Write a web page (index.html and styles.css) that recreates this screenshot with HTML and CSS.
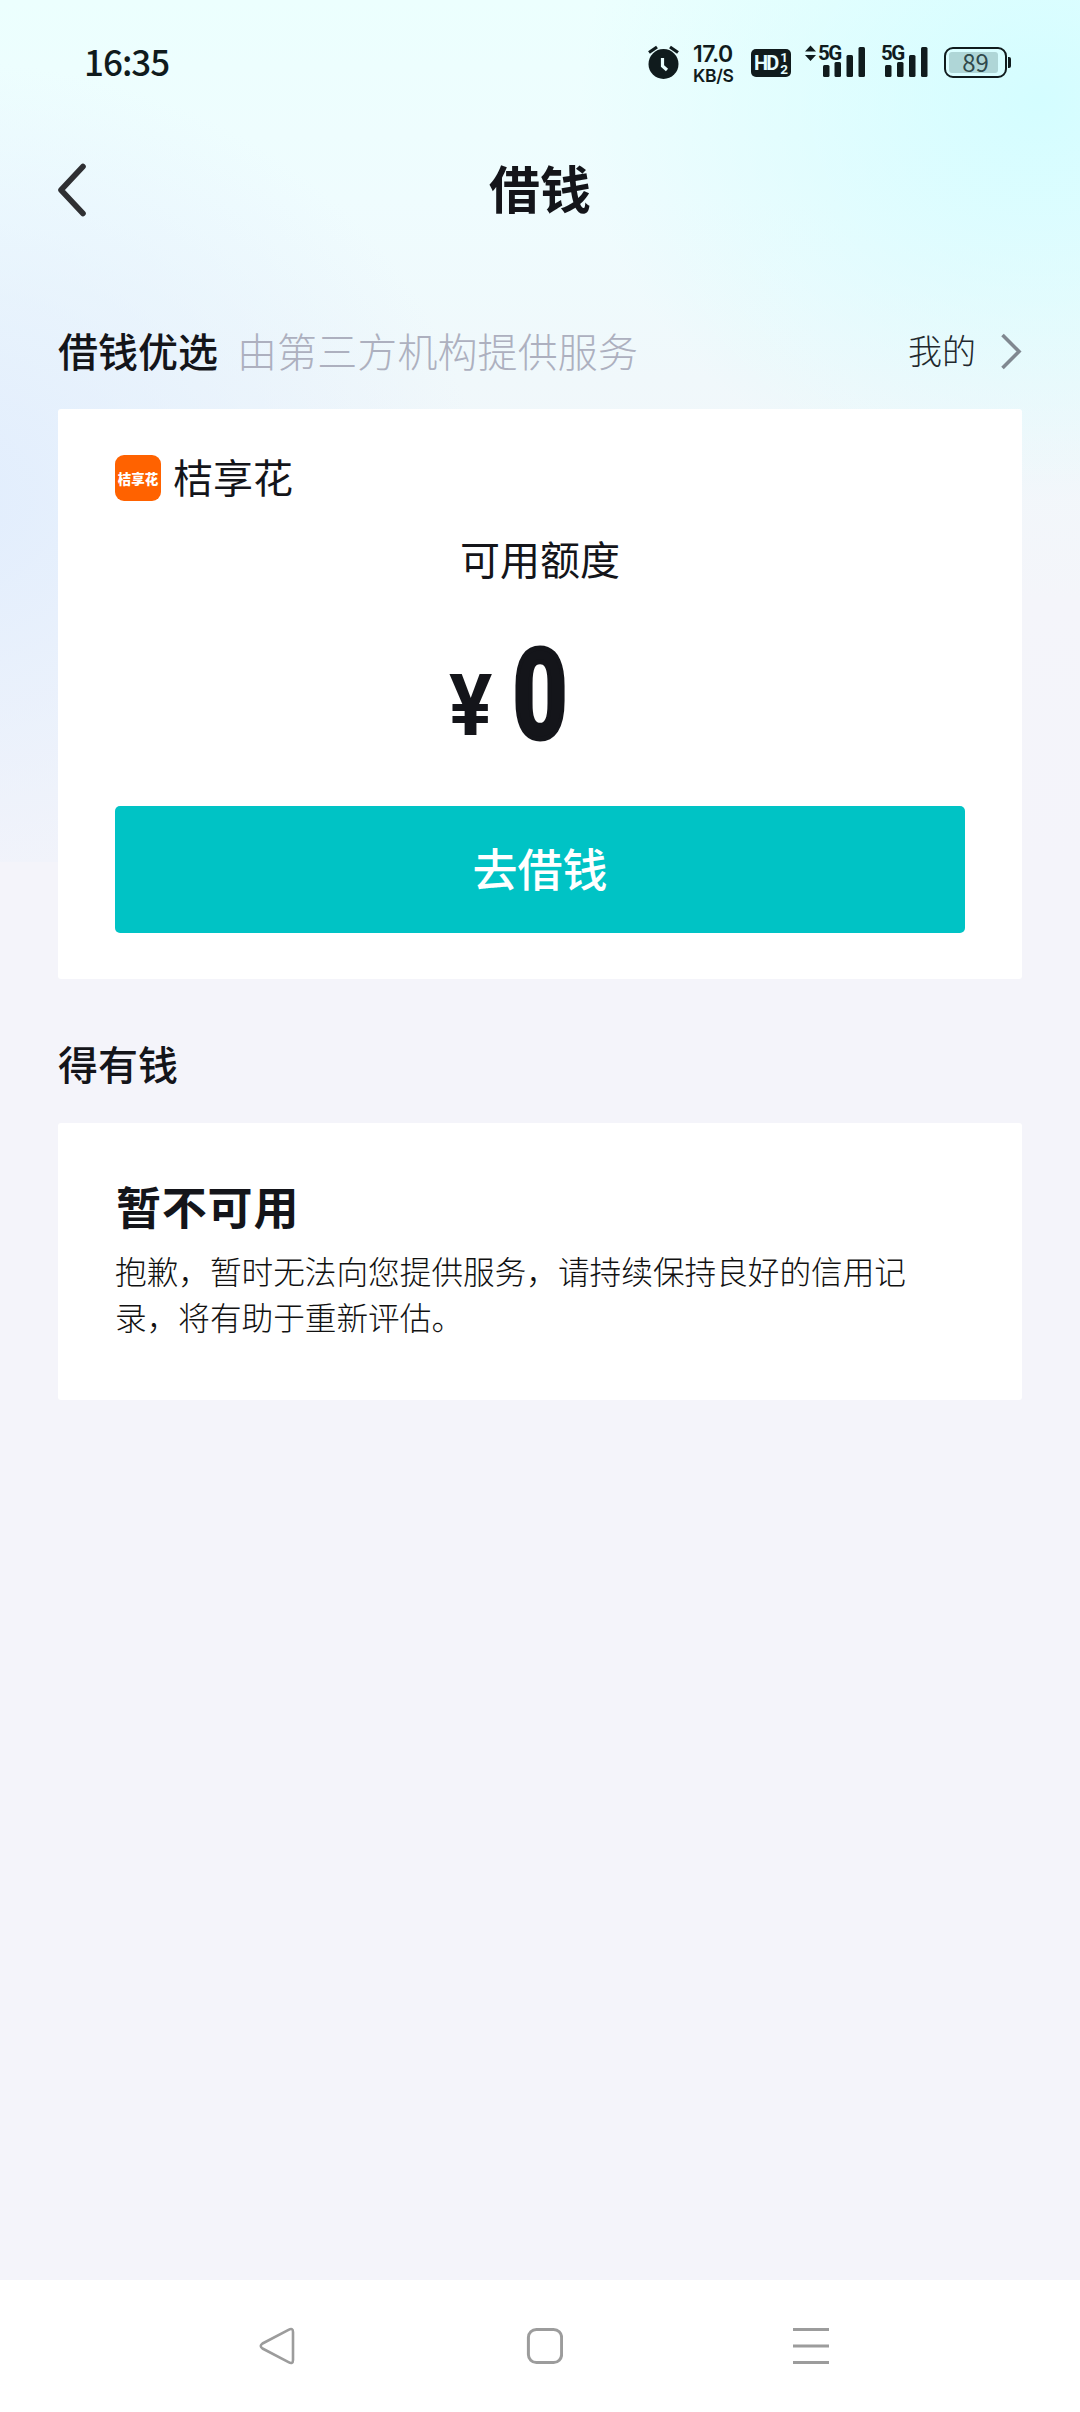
FILE: index.html
```html
<!DOCTYPE html>
<html lang="zh-CN">
<head>
<meta charset="utf-8">
<title>借钱</title>
<link rel="stylesheet" href="styles.css">
</head>
<body>
<div class="screen">
  <header class="status">
    <span class="clock">16:35</span>
    <div class="status-icons">
      <svg class="alarm" width="32" height="36" viewBox="0 0 32 36"><circle cx="15.500" cy="19" r="15" fill="#101b1d"/><path d="M1 7.500 9 2M30 7.500 22 2" stroke="#101b1d" stroke-width="3.200"/><path d="M14.500 13v8l4.500 4" fill="none" stroke="#e9feff" stroke-width="3.200"/></svg>
      <div class="speed"><span class="rate">17.0</span><span class="unit">KB/S</span></div>
      <div class="hd"><span class="hd-text">HD</span><span class="hd-nums"><span>1</span><span>2</span></span></div>
      <div class="signal first">
        <svg width="60" height="36" viewBox="0 0 60 36"><path d="m0 6.500 5.500-6 5.500 6zM0 10h11l-5.500 6z" fill="#101b1d"/><g fill="#101b1d"><rect x="18" y="20" width="6.500" height="12" rx="1.500"/><rect x="29.500" y="17" width="6.500" height="15" rx="1.500"/><rect x="41.500" y="10" width="6.500" height="22" rx="1.500"/><rect x="53.500" y="2" width="6.500" height="30" rx="1.500"/></g></svg>
        <span class="net">5G</span>
      </div>
      <div class="signal second">
        <svg width="47" height="36" viewBox="13 0 47 36"><g fill="#101b1d"><rect x="17" y="20" width="6.500" height="12" rx="1.500"/><rect x="29" y="17" width="6.500" height="15" rx="1.500"/><rect x="41" y="10" width="6.500" height="22" rx="1.500"/><rect x="53" y="2" width="6.500" height="30" rx="1.500"/></g></svg>
        <span class="net">5G</span>
      </div>
      <div class="battery"><span class="level">89</span></div><i class="battery-tip"></i>
    </div>
  </header>
  <nav class="titlebar">
    <svg class="back" width="30" height="54" viewBox="0 0 30 54"><path d="M26 3.500 4 27l22 23.500" fill="none" stroke="#2f3033" stroke-width="5.600" stroke-linecap="round" stroke-linejoin="round"/></svg>
    <h1>借钱</h1>
  </nav>
  <main>
    <div class="section-head">
      <h2>借钱优选</h2>
      <span class="note">由第三方机构提供服务</span>
      <a class="mine"><span>我的</span><svg width="22" height="38" viewBox="0 0 22 38"><path d="m2.500 2 16.500 16.500L2.500 35" fill="none" stroke="#808890" stroke-width="3.600"/></svg></a>
    </div>
    <section class="card offer">
      <div class="brand"><span class="logo"><b>桔享花</b></span><span class="brand-name">桔享花</span></div>
      <p class="quota-label">可用额度</p>
      <div class="amount"><span class="yen">¥</span><span class="zero">0</span></div>
      <button class="borrow">去借钱</button>
    </section>
    <h2 class="second-head">得有钱</h2>
    <section class="card unavailable">
      <h3>暂不可用</h3>
      <p>抱歉，暂时无法向您提供服务，请持续保持良好的信用记录，将有助于重新评估。</p>
    </section>
  </main>
  <footer class="system-nav">
    <svg width="36" height="38" viewBox="0 0 36 38"><path d="M29.500 2.800Q34 .5 34 5v28q0 4.500-4.500 2.200L3.500 21.500Q0 19 3.500 16.500z" fill="none" stroke="#9c9c9c" stroke-width="2.600" stroke-linejoin="round"/></svg>
    <svg class="home" width="38" height="38" viewBox="0 0 38 38"><rect x="3.400" y="2.400" width="33.200" height="33.200" rx="8" fill="none" stroke="#9c9c9c" stroke-width="3"/></svg>
    <svg width="36" height="38" viewBox="0 0 36 38"><path d="M0 2.500h36M0 19h36M0 35.500h36" stroke="#9c9c9c" stroke-width="3"/></svg>
  </footer>
</div>
</body>
</html>
```
FILE: styles.css
```css
* { box-sizing: border-box; margin: 0; padding: 0; }
body {
  width: 1080px;
  height: 2412px;
  overflow: hidden;
  font-family: "Noto Sans CJK SC", sans-serif;
  color: #14151a;
  background: #f4f4fa;
}
.screen {
  display: flex;
  flex-direction: column;
  height: 2412px;
  background:
    radial-gradient(ellipse 460px 400px at 1040px 100px, #d4fdff 0%, rgba(212,253,255,.7) 30%, rgba(212,253,255,0) 100%) no-repeat 0 0 / 1080px 862px,
    radial-gradient(ellipse 540px 440px at -60px 500px, #e1edfd 0%, rgba(226,238,253,.6) 45%, rgba(226,238,253,0) 100%) no-repeat 0 0 / 1080px 862px,
    linear-gradient(#ecfffe 0, #effcfe 200px, #f0f8fb 380px, #f4f5fa 600px, #f4f4fa 862px) no-repeat 0 0 / 1080px 862px,
    #f4f4fa;
}
.status {
  display: flex;
  justify-content: space-between;
  height: 126px;
  padding: 45px 69px 0 84px;
  color: #101b1d;
}
.clock {
  margin-top: -2px;
  font: 500 35px/36px "Noto Sans CJK SC", sans-serif;
  letter-spacing: -1px;
}
.status-icons { display: flex; align-items: flex-start; height: 36px; }
.speed {
  display: flex;
  flex-direction: column;
  width: 45px;
  margin-left: 13px;
  font-family: Inter, sans-serif;
  white-space: nowrap;
}
.rate { margin-top: -1px; font-size: 23px; line-height: 20px; font-weight: 600; letter-spacing: -.6px; }
.unit { margin-top: 3px; font-size: 17.500px; line-height: 17px; font-weight: 600; letter-spacing: -.3px; }
.hd {
  display: flex;
  align-items: center;
  justify-content: center;
  width: 40px;
  height: 28px;
  margin: 4px 0 0 13px;
  border-radius: 5px;
  background: #101b1d;
  color: #e6fdff;
  font-family: Roboto, sans-serif;
  font-weight: 700;
}
.hd-text { font-size: 20px; line-height: 28px; letter-spacing: -2px; }
.hd-nums { display: flex; flex-direction: column; margin-left: 3px; font-size: 13.500px; line-height: 12px; }
.signal { position: relative; height: 36px; }
.signal svg { display: block; }
.first { margin-left: 14px; }
.second { margin-left: 16px; }
.net {
  position: absolute;
  top: -2px;
  left: 13px;
  font: 700 20.500px/20px Roboto, sans-serif;
  letter-spacing: -1.500px;
}
.second .net { left: 0; }
.battery {
  width: 63px;
  height: 31px;
  margin: 2px 0 0 16px;
  border: 2.500px solid #101b1d;
  border-radius: 9px;
  padding: 3px;
}
.level {
  display: block;
  width: 49px;
  height: 21px;
  padding-left: 4px;
  border-radius: 3px;
  background: #afd6d7;
  font: 400 24px/19px "Noto Sans CJK SC", sans-serif;
  color: #30494b;
  text-align: center;
}
.battery-tip { width: 3px; height: 11px; margin: 12px 0 0 1px; border-radius: 0 2px 2px 0; background: #101b1d; }
.titlebar {
  display: grid;
  grid-template-columns: 100px 1fr 100px;
  align-items: center;
  height: 128px;
  padding: 0 57px;
}
.titlebar h1 { margin-bottom: 6px; font-size: 51px; line-height: 60px; font-weight: 700; text-align: center; }
main { flex: 1; padding: 58px 58px 0; }
.section-head { display: flex; align-items: center; height: 80px; margin-bottom: 17px; }
h2 { font-size: 40px; line-height: 60px; font-weight: 500; }
.section-head h2, .note, .mine span { margin-bottom: 5px; }
.note { margin-left: 19px; font-size: 40px; line-height: 60px; font-weight: 300; letter-spacing: .1px; color: #adb0bf; }
.mine { display: flex; align-items: center; gap: 24px; margin-left: auto; font-size: 34px; line-height: 50px; font-weight: 300; color: #22282d; }
.card { background: #fff; border-radius: 3px; padding: 0 57px; }
.offer { display: flex; flex-direction: column; height: 570px; padding-top: 39px; }
.brand { display: flex; align-items: center; gap: 12px; height: 60px; font-size: 40px; line-height: 60px; font-weight: 400; }
.brand-name { margin-bottom: 5px; }
.logo { display: flex; align-items: center; justify-content: center; width: 46px; height: 46px; border-radius: 9px; background: #ff6200; color: #fff; }
.logo b { font-size: 13.500px; line-height: 16px; font-weight: 900; white-space: nowrap; }
.quota-label { margin-top: 20px; font-size: 40px; line-height: 60px; text-align: center; font-weight: 400; }
.amount { display: flex; align-items: flex-start; justify-content: center; height: 120px; margin: 48px 56px 0 0; font-family: Roboto, sans-serif; font-weight: 700; }
.yen { width: 52px; font-size: 86px; line-height: 120px; padding-top: 10px; transform: scaleX(.94); transform-origin: 0 50%; margin-left: -4px; margin-right: 4px; }
.zero { width: 66px; font-size: 124px; line-height: 120px; transform: scaleX(.76); -webkit-text-stroke: 5px #14151a; }
.borrow {
  height: 127px;
  margin-top: 50px;
  border: 0;
  border-radius: 5px;
  background: #00c3c5;
  color: #fff;
  font: 500 45px/124px "Noto Sans CJK SC", sans-serif;
  padding-bottom: 3px;
}
.second-head { margin: 54px 0 30px; }
.unavailable { height: 277px; padding-top: 53px; }
.unavailable h3 { padding-left: 1px; font-size: 45px; line-height: 60px; font-weight: 700; letter-spacing: .8px; }
.unavailable p { width: 800px; margin-top: 11px; font-size: 31.650px; line-height: 46px; font-weight: 300; color: #111; }
.system-nav { display: flex; height: 132px; padding: 47px 251px 0 259px; justify-content: space-between; background: #fff; }
```
